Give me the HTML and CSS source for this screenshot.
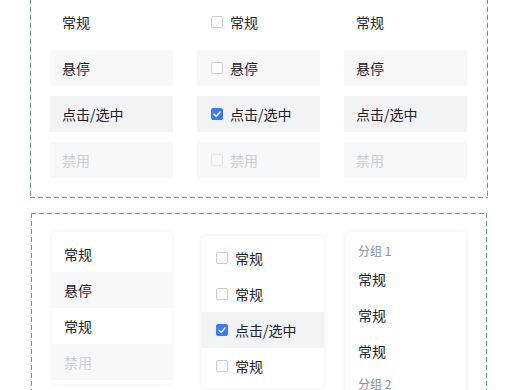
FILE: index.html
```html
<!DOCTYPE html>
<html lang="zh">
<head>
<meta charset="utf-8">
<link rel="stylesheet" href="styles.css">
</head>
<body>
<section class="demo demo-states">
  <div class="col">
    <div class="opt">常规</div>
    <div class="opt hover">悬停</div>
    <div class="opt active">点击/选中</div>
    <div class="opt disabled">禁用</div>
  </div>
  <div class="col">
    <div class="opt chk"><span class="cb"></span>常规</div>
    <div class="opt chk hover"><span class="cb"></span>悬停</div>
    <div class="opt chk active"><span class="cb on"><svg viewBox="0 0 12 12" width="12" height="12"><path d="M3 6.2 L5.2 8.2 L9 4" fill="none" stroke="#fff" stroke-width="1.5" stroke-linecap="round" stroke-linejoin="round"/></svg></span>点击/选中</div>
    <div class="opt chk disabled"><span class="cb"></span>禁用</div>
  </div>
  <div class="col">
    <div class="opt">常规</div>
    <div class="opt hover">悬停</div>
    <div class="opt active">点击/选中</div>
    <div class="opt disabled">禁用</div>
  </div>
</section>

<section class="demo demo-menus">
  <div class="menu m1">
    <div class="item">常规</div>
    <div class="item hover">悬停</div>
    <div class="item">常规</div>
    <div class="item disabled">禁用</div>
  </div>
  <div class="menu m2">
    <div class="item chk"><span class="cb"></span>常规</div>
    <div class="item chk"><span class="cb"></span>常规</div>
    <div class="item chk active"><span class="cb on"><svg viewBox="0 0 12 12" width="12" height="12"><path d="M3 6.2 L5.2 8.2 L9 4" fill="none" stroke="#fff" stroke-width="1.5" stroke-linecap="round" stroke-linejoin="round"/></svg></span>点击/选中</div>
    <div class="item chk"><span class="cb"></span>常规</div>
  </div>
  <div class="menu m3">
    <div class="group">分组 1</div>
    <div class="item">常规</div>
    <div class="item">常规</div>
    <div class="item">常规</div>
    <div class="group">分组 2</div>
  </div>
</section>
</body>
</html>
```
FILE: styles.css
```css
html, body {
  margin: 0;
  padding: 0;
  background: #fff;
  overflow: hidden;
  height: 390px;
}
body {
  font-family: "Noto Sans CJK SC", "Noto Sans", sans-serif;
  font-size: 14px;
  color: #1d2129;
}
.demo {
  --dash: #5f96c2;
  box-sizing: border-box;
  width: 458px;
  margin-left: 30px;
  background-image:
    repeating-linear-gradient(90deg, var(--dash) 0 5px, transparent 5px 8px),
    repeating-linear-gradient(90deg, var(--dash) 0 5px, transparent 5px 8px),
    repeating-linear-gradient(180deg, var(--dash) 0 5px, transparent 5px 8px),
    repeating-linear-gradient(180deg, var(--dash) 0 5px, transparent 5px 8px);
  background-size: 100% 1px, 100% 1px, 1px 100%, 1px 100%;
  background-position: left top, left bottom, left top, right top;
  background-repeat: no-repeat;
}
.demo-states {
  margin-top: -17px;
  padding: 21px 21px 20px 20px;
  display: flex;
  gap: 24px;
}
.col {
  width: 123px;
  display: flex;
  flex-direction: column;
  gap: 10px;
}
.opt {
  height: 36px;
  line-height: 36px;
  padding: 0 12px;
  display: flex;
  align-items: center;
  white-space: nowrap;
}
.opt.hover { background: #f7f8fa; }
.opt.active { background: #f2f3f5; }
.opt.disabled { background: #f7f8fa; color: #c9cdd4; }
.opt.chk, .item.chk { padding-left: 14px; }
.cb {
  box-sizing: border-box;
  width: 12px;
  height: 12px;
  border: 1px solid #c9cdd4;
  border-radius: 2px;
  background: #fff;
  margin-right: 7px;
  flex: none;
  display: flex;
  align-items: center;
  justify-content: center;
}
.cb.on {
  background: #3a7af2;
  border-color: #3a7af2;
}
.cb.on svg { flex: none; }
.disabled .cb {
  border-color: #e5e6eb;
  background: #f7f8fa;
}

.demo-menus {
  margin-top: 15px;
  width: 456px;
  margin-left: 31px;
  padding: 19px 0 0 21px;
  height: 200px;
  display: flex;
  align-items: flex-start;
}
.menu {
  box-sizing: border-box;
  width: 120px;
  padding: 4px 0;
  background: #fff;
  border-radius: 4px;
  box-shadow: 0 0 6px rgba(0, 0, 0, 0.07);
}
.m2 {
  width: 122px;
  margin-left: 30px;
  margin-top: 4px;
}
.m3 {
  margin-left: 22px;
}
.item {
  height: 36px;
  line-height: 36px;
  padding: 0 12px;
  display: flex;
  align-items: center;
  white-space: nowrap;
}
.item.hover { background: #f7f8fa; }
.item.active { background: #f2f3f5; }
.item.disabled { background: #f7f8fa; color: #c9cdd4; }
.group {
  height: 25px;
  box-sizing: border-box;
  padding: 5px 12px 0;
  line-height: 20px;
  font-size: 12px;
  color: #86909c;
}
```
